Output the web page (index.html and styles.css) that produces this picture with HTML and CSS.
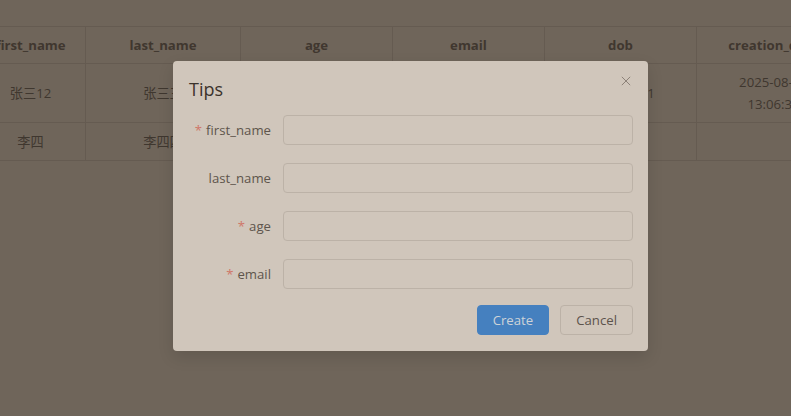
FILE: index.html
```html
<!DOCTYPE html>
<html lang="zh">
<head>
<meta charset="utf-8">
<link rel="stylesheet" href="styles.css">
</head>
<body>
<div class="table-wrap">
  <table class="grid">
    <colgroup>
      <col class="c1"><col class="c2"><col class="c3"><col class="c4"><col class="c5"><col class="c6">
    </colgroup>
    <thead>
      <tr><th>first_name</th><th>last_name</th><th>age</th><th>email</th><th>dob</th><th>creation_date</th></tr>
    </thead>
    <tbody>
      <tr class="tall"><td>张三12</td><td>张三三</td><td>18</td><td>zhangsan@qq.com</td><td>2000-01-01</td><td class="date">2025-08-01 13:06:30</td></tr>
      <tr><td>李四</td><td>李四四</td><td>20</td><td>lisi@qq.com</td><td></td><td></td></tr>
    </tbody>
  </table>
</div>

<div class="overlay">
  <div class="dialog">
    <div class="dialog-header">
      <span class="dialog-title">Tips</span>
      <svg class="close" viewBox="0 0 12 12" width="12" height="12"><path d="M1 1 L11 11 M11 1 L1 11" stroke="#857b72" stroke-width="1.1" fill="none"/></svg>
    </div>
    <form class="form">
      <div class="form-item">
        <label class="label"><span class="req">*</span>first_name</label>
        <div class="input"></div>
      </div>
      <div class="form-item">
        <label class="label">last_name</label>
        <div class="input"></div>
      </div>
      <div class="form-item">
        <label class="label"><span class="req">*</span>age</label>
        <div class="input"></div>
      </div>
      <div class="form-item">
        <label class="label"><span class="req">*</span>email</label>
        <div class="input"></div>
      </div>
    </form>
    <div class="footer">
      <button class="btn primary" type="button">Create</button>
      <button class="btn" type="button">Cancel</button>
    </div>
  </div>
</div>
</body>
</html>
```

FILE: styles.css
```css
html, body {
  margin: 0;
  padding: 0;
}
body {
  width: 791px;
  height: 416px;
  overflow: hidden;
  background: #6f655a;
  font-family: "Open Sans", "Noto Sans CJK SC", sans-serif;
  font-size: 13.2px;
  color: #3f372f;
}
.table-wrap {
  padding-top: 26px;
  overflow: hidden;
  width: 791px;
}
.grid {
  border-collapse: collapse;
  table-layout: fixed;
  margin-left: -25px;
  width: 875px;
}
.c1 { width: 110px; }
.c2 { width: 155px; }
.c3 { width: 152px; }
.c4 { width: 152px; }
.c5 { width: 152px; }
.c6 { width: 154px; }
.grid th, .grid td {
  border: 1px solid #655b51;
  text-align: center;
  padding: 7px 12px;
  line-height: 22px;
  white-space: normal;
  overflow: hidden;
}
.grid td.date {
  padding-left: 20px;
  padding-right: 20px;
}
.grid th {
  font-weight: 700;
  color: #40372f;
  height: 22px;
}
.grid tr.tall td {
  height: 44px;
}
.grid td {
  height: 23px;
  color: #3f372f;
}
.overlay {
  position: absolute;
  inset: 0;
}
.dialog {
  position: absolute;
  left: 173px;
  top: 61px;
  width: 475px;
  box-sizing: border-box;
  padding: 16px 15px 16px 16px;
  background: #d0c6bb;
  border-radius: 4px;
  box-shadow: 0 6px 16px rgba(0,0,0,0.12);
}
.dialog-header {
  display: flex;
  align-items: center;
  justify-content: space-between;
  height: 24px;
  margin-bottom: 14px;
}
.dialog-title {
  font-size: 18px;
  line-height: 24px;
  color: #3b332c;
  font-weight: 400;
}
.close {
  width: 10px;
  height: 10px;
  margin-right: 2px;
  margin-top: -16px;
}
.form {
  display: flex;
  flex-direction: column;
  gap: 18px;
}
.form-item {
  display: flex;
  align-items: center;
  height: 30px;
}
.label {
  width: 94px;
  box-sizing: border-box;
  padding-right: 12px;
  text-align: right;
  color: #5e554c;
}
.req {
  color: #cf7769;
  margin-right: 4px;
}
.input {
  flex: 1;
  height: 30px;
  box-sizing: border-box;
  border: 1px solid #bcb2a7;
  border-radius: 4px;
  background: #d0c6bb;
}
.footer {
  display: flex;
  justify-content: flex-end;
  gap: 11px;
  margin-top: 16px;
}
.btn {
  height: 30px;
  padding: 0 15px;
  font-family: inherit;
  font-size: 13.2px;
  border: 1px solid #bcb2a7;
  background: #d0c6bb;
  color: #5c534b;
  border-radius: 4px;
}
.btn.primary {
  background: #4580bf;
  border-color: #4580bf;
  color: #cdd3d8;
}
```
